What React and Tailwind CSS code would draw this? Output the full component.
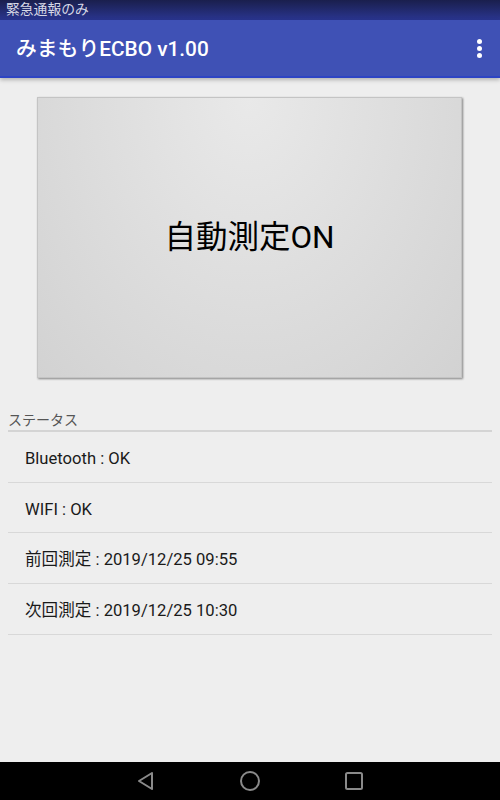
import React from 'react';

const rows = [
  'Bluetooth : OK',
  'WIFI : OK',
  '前回測定 : 2019/12/25 09:55',
  '次回測定 : 2019/12/25 10:30',
];

const font = { fontFamily: 'Roboto, "Noto Sans CJK JP", sans-serif' };

export default function App() {
  return (
    <div className="w-[500px] h-[800px] flex flex-col bg-[#eeeeee] overflow-hidden" style={font}>
      {/* status bar */}
      <div className="h-[20px] bg-gradient-to-b from-[#1a1f4d] to-[#2a3590] flex items-center px-[6px]">
        <span className="text-[13.8px] leading-none text-[#d6d8e6]">緊急通報のみ</span>
      </div>

      {/* app bar */}
      <div className="h-[58px] bg-[#3f51b5] border-b-2 border-[#2d44c4] flex items-center justify-between pl-[16px] pr-[18px] shadow-[0_2px_4px_rgba(0,0,0,0.25)] relative z-10">
        <span className="text-[20.8px] font-medium text-white pt-[4px]">みまもりECBO v1.00</span>
        <div className="flex flex-col gap-[2px]">
          <span className="w-[5px] h-[5px] rounded-full bg-white"></span>
          <span className="w-[5px] h-[5px] rounded-full bg-white"></span>
          <span className="w-[5px] h-[5px] rounded-full bg-white"></span>
        </div>
      </div>

      {/* content */}
      <div className="flex-1 flex flex-col">
        <div className="pt-[19px] px-[37px] pr-[38px]">
          <div className="h-[281px] bg-[radial-gradient(ellipse_at_top,#e9e9e9,#d2d2d2)] border border-[#c4c4c4] shadow-[1px_1px_2px_rgba(0,0,0,0.45)] flex items-center justify-center">
            <span className="text-[31.5px] text-black">自動測定ON</span>
          </div>
        </div>

        <div className="mt-[33px] px-[8px]">
          <div className="text-[14px] text-[#555555] leading-[18px] pb-[1px] border-b-2 border-[#d4d4d4]">ステータス</div>
          {rows.map((r) => (
            <div key={r} className="h-[50.7px] flex items-center pl-[17px] pt-[5px] border-b border-[#d8d8d8] text-[16.6px] text-[#1a1a1a]">
              {r}
            </div>
          ))}
        </div>
      </div>

      {/* nav bar */}
      <div className="h-[38px] bg-black flex items-center justify-center gap-[82px]">
        <svg width="22" height="22" viewBox="0 0 22 22" fill="none" stroke="#8a8a8a" strokeWidth="2">
          <path d="M17 3 L4 11 L17 19 Z" strokeLinejoin="round" />
        </svg>
        <svg width="22" height="22" viewBox="0 0 22 22" fill="none" stroke="#8a8a8a" strokeWidth="2">
          <circle cx="11" cy="11" r="9" />
        </svg>
        <svg width="22" height="22" viewBox="0 0 22 22" fill="none" stroke="#8a8a8a" strokeWidth="2">
          <rect x="3" y="3" width="16" height="16" rx="1.5" />
        </svg>
      </div>
    </div>
  );
}
